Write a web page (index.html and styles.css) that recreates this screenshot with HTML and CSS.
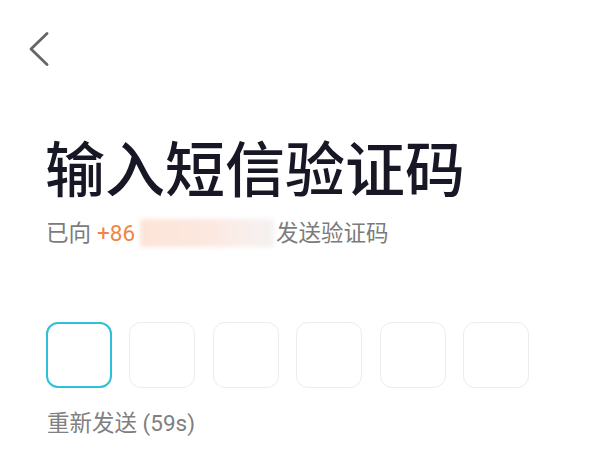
FILE: index.html
```html
<!DOCTYPE html>
<html lang="zh-CN">
<head>
<meta charset="utf-8">
<link rel="stylesheet" href="styles.css">
</head>
<body>
<div class="page">
  <div class="back">
    <svg width="22" height="36" viewBox="0 0 22 36"><path d="M19 1.5 L3 17 L19 32.5" fill="none" stroke="#666" stroke-width="2.8" stroke-linecap="round" stroke-linejoin="round"/></svg>
  </div>
  <h1 class="title">输入短信验证码</h1>
  <p class="sub"><span>已向</span><span class="cc">+86</span><span class="mask"></span><span>发送验证码</span></p>
  <div class="codes">
    <div class="box active"></div>
    <div class="box"></div>
    <div class="box"></div>
    <div class="box"></div>
    <div class="box"></div>
    <div class="box"></div>
  </div>
  <p class="resend">重新发送 (59s)</p>
</div>
</body>
</html>
```
FILE: styles.css
```css
html, body { margin: 0; padding: 0; background: #fff; }
body { font-family: Roboto, "Noto Sans CJK SC", sans-serif; width: 600px; height: 450px; overflow: hidden; }
.page { padding: 32px 0 0 46px; }
.back { margin-left: -18px; height: 36px; }
.back svg { display: block; }
.title { margin: 68px 0 0 -1px; font-family: "Noto Sans CJK SC", sans-serif; font-size: 60px; line-height: 60px; font-weight: 500; color: #171725; letter-spacing: 0; }
.sub { margin: 22px 0 0 0; font-size: 22.5px; line-height: 30px; color: #7b7b7b; display: flex; align-items: center; }
.sub .cc { color: #f08447; margin-left: 6px; }
.mask { display: inline-block; width: 134px; height: 28px; margin: 0 2px 0 5px; background: linear-gradient(90deg, #fde4d9 0%, #fce8df 50%, #f8efec 80%, #f4f1f1 100%); filter: blur(2px); }
.codes { display: flex; gap: 17.4px; margin-top: 74px; }
.box { width: 66px; height: 66px; box-sizing: border-box; border: 1.5px solid #ececec; border-radius: 12px; }
.box.active { border: 2px solid #2fbfd8; }
.resend { margin: 20px 0 0 1px; font-size: 22.5px; line-height: 30px; color: #808080; }
```
